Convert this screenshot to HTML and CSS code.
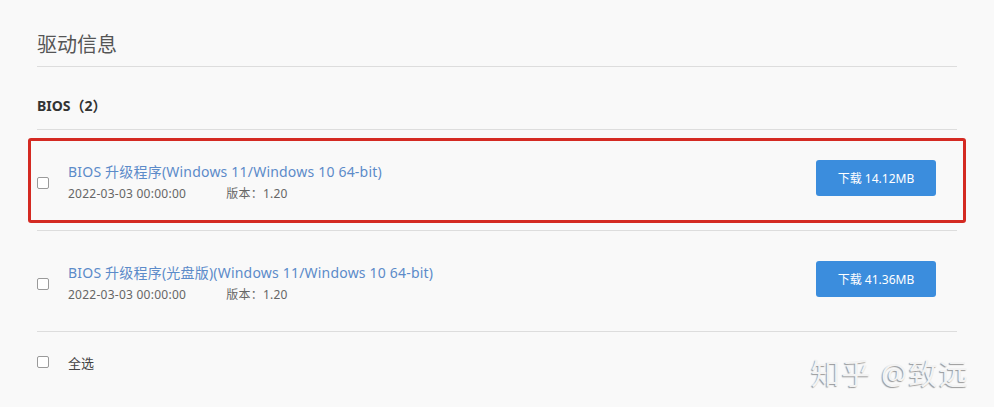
FILE: index.html
```html
<!DOCTYPE html>
<html lang="zh-CN">
<head>
<meta charset="utf-8">
<title>驱动信息</title>
<link rel="stylesheet" href="styles.css">
</head>
<body>
<div class="page">
  <main class="panel">
    <h1 class="title">驱动信息</h1>
    <h2 class="group">BIOS（2）</h2>
    <div class="row highlighted">
      <span class="check"></span>
      <div class="info">
        <a class="name">BIOS 升级程序(Windows 11/Windows 10 64-bit)</a>
        <div class="meta"><span class="date">2022-03-03 00:00:00</span><span class="ver">版本：1.20</span></div>
      </div>
      <button class="dl">下载 14.12MB</button>
      <span class="mark"></span>
    </div>
    <div class="row">
      <span class="check"></span>
      <div class="info">
        <a class="name">BIOS 升级程序(光盘版)(Windows 11/Windows 10 64-bit)</a>
        <div class="meta"><span class="date">2022-03-03 00:00:00</span><span class="ver">版本：1.20</span></div>
      </div>
      <button class="dl">下载 41.36MB</button>
    </div>
    <div class="all">
      <span class="check"></span>
      <span class="all-label">全选</span>
    </div>
  </main>
  <div class="watermark">知乎 @致远</div>
</div>
</body>
</html>
```
FILE: styles.css
```css
html, body {
  margin: 0;
  padding: 0;
  background: #ffffff;
}
body {
  font-family: "Noto Sans", "Noto Sans CJK SC", sans-serif;
  color: #333;
}
.page {
  position: relative;
  height: 407px;
  background: #f9f9f9;
  overflow: hidden;
}
.panel {
  width: 920px;
  padding: 0 0 0 37px;
}
.title {
  margin: 0;
  padding-top: 31px;
  height: 35px;
  font-size: 20px;
  line-height: 28px;
  font-weight: normal;
  color: #555;
  border-bottom: 1px solid #dddddd;
}
.group {
  margin: 0;
  height: 63px;
  box-sizing: border-box;
  padding-top: 29px;
  font-size: 14px;
  line-height: 20px;
  font-weight: bold;
  color: #333;
  border-bottom: 1px solid #dddddd;
}
.row {
  position: relative;
  display: flex;
  align-items: center;
  height: 101px;
  box-sizing: border-box;
  border-bottom: 1px solid #dddddd;
}
.check {
  flex: none;
  width: 10px;
  height: 10px;
  border: 1px solid #9a9a9a;
  border-radius: 2px;
  background: #fff;
}
.row .check {
  margin-top: 6px;
}
.info {
  flex: 1;
  margin-left: 19px;
  display: flex;
  flex-direction: column;
  gap: 2px;
  padding-top: 6px;
}
.name {
  font-size: 14px;
  line-height: 20px;
  letter-spacing: 0.2px;
  color: #5c8bc9;
}
.meta {
  font-size: 12px;
  line-height: 20px;
  letter-spacing: 0.25px;
  color: #666;
}
.ver {
  margin-left: 40px;
}
.dl {
  flex: none;
  width: 120px;
  height: 36px;
  margin-right: 21px;
  margin-top: -4px;
  border: none;
  border-radius: 3px;
  background: #3b8ddd;
  color: #fff;
  font-family: inherit;
  font-size: 12px;
}
.mark {
  position: absolute;
  left: -9px;
  right: -9px;
  top: 8px;
  bottom: 7px;
  border: 3px solid #d42a22;
  border-radius: 3px;
  pointer-events: none;
}
.all {
  display: flex;
  align-items: center;
  height: 60px;
}
.all-label {
  margin-left: 19px;
  font-size: 13px;
  color: #444;
}
.watermark {
  position: absolute;
  left: 811px;
  top: 355px;
  font-size: 29px;
  line-height: 38px;
  letter-spacing: 1.5px;
  color: #f3f3f3;
  text-shadow: -1px 1px 1px #999999;
  white-space: nowrap;
}
```
